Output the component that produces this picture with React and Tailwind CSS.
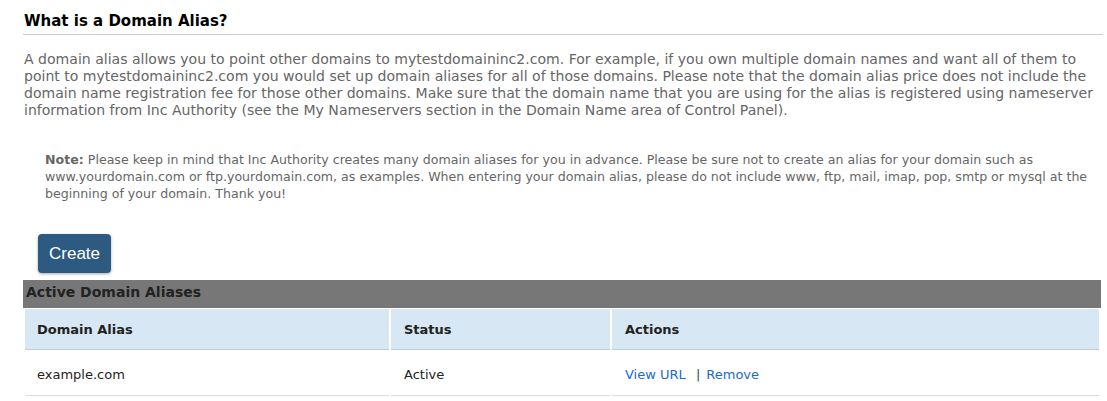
import React from 'react';

const rows = [{ alias: 'example.com', status: 'Active' }];

export default function App() {
  return (
    <div className="pl-[23px] pr-[4px] pt-[11px] bg-white text-[13px] leading-[17px] text-[#666]" style={{ fontFamily: '"DejaVu Sans", Verdana, sans-serif' }}>
      <h2 className="text-[15px] leading-[20px] font-bold text-black pb-[3px] border-b border-[#cccccc] pl-px">
        What is a Domain Alias?
      </h2>

      <p className="mt-[16px] pl-px text-[14.05px]">
        A domain alias allows you to point other domains to mytestdomaininc2.com. For example, if you own multiple domain names and want all of them to point to mytestdomaininc2.com you would set up domain aliases for all of those domains. Please note that the domain alias price does not include the domain name registration fee for those other domains. Make sure that the domain name that you are using for the alias is registered using nameserver information from Inc Authority (see the My Nameservers section in the Domain Name area of Control Panel).
      </p>

      <p className="mt-[32px] pl-[22px] pr-[8px] text-[12.6px] leading-[17px]">
        <span className="font-bold">Note:</span> Please keep in mind that Inc Authority creates many domain aliases for you in advance. Please be sure not to create an alias for your domain such as www.yourdomain.com or ftp.yourdomain.com, as examples. When entering your domain alias, please do not include www, ftp, mail, imap, pop, smtp or mysql at the beginning of your domain. Thank you!
      </p>

      <div className="mt-[32px] pl-[15px]">
        <button className="h-[39px] w-[73px] rounded-[4px] bg-[#2d5a80] text-white text-[17px] shadow-[0_1px_3px_rgba(0,0,0,0.35)]" style={{ fontFamily: '"Liberation Sans", Arial, sans-serif' }}>
          Create
        </button>
      </div>

      <div className="mt-[7px] mr-[2px]">
        <div className="h-[28px] bg-[#777777] text-[#222] font-bold text-[14px] leading-[24px] pl-[3px]">
          Active Domain Aliases
        </div>
        <table className="w-full border-separate border-spacing-[2px] -mt-px text-[#222]">
          <thead>
            <tr className="bg-[#d8e7f4]">
              <th className="w-[364px] h-[41px] text-left font-bold pl-[12px] border-b border-[#b9cedd]">Domain Alias</th>
              <th className="w-[219px] text-left font-bold pl-[13px] border-b border-[#b9cedd]">Status</th>
              <th className="text-left font-bold pl-[13px] border-b border-[#b9cedd]">Actions</th>
            </tr>
          </thead>
          <tbody>
            {rows.map(r => (
              <tr key={r.alias}>
                <td className="h-[44px] pl-[12px] pt-[2px] border-b border-[#dddddd]">{r.alias}</td>
                <td className="pl-[13px] pt-[2px] border-b border-[#dddddd]">{r.status}</td>
                <td className="pl-[13px] pt-[2px] border-b border-[#dddddd]">
                  <a href="#" className="text-[#1a6bcc]">View URL</a>
                  <span className="text-[#444] mx-[6px]">&nbsp;|</span>
                  <a href="#" className="text-[#1a6bcc]">Remove</a>
                </td>
              </tr>
            ))}
          </tbody>
        </table>
      </div>
    </div>
  );
}
